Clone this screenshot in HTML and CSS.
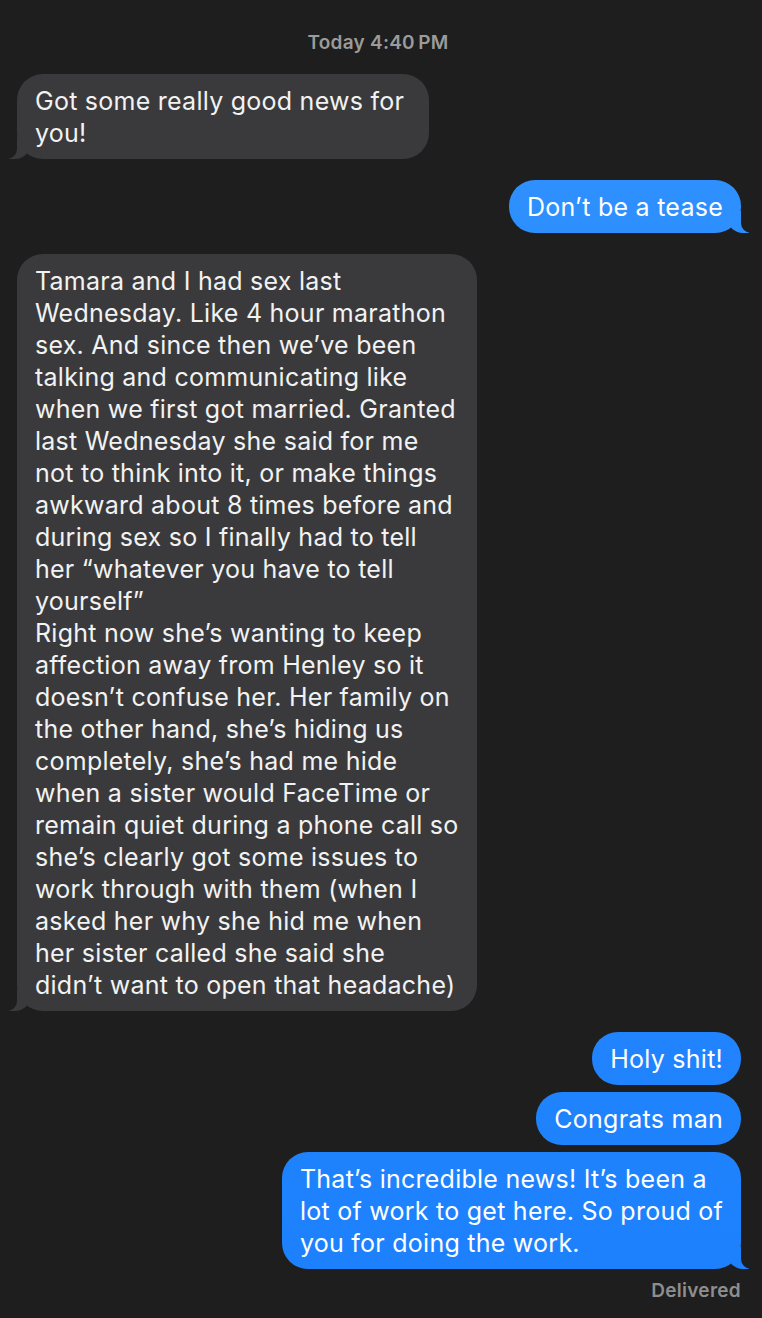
FILE: index.html
```html
<!DOCTYPE html>
<html lang="en">
<head>
<meta charset="utf-8">
<title>Messages</title>
<link rel="stylesheet" href="styles.css">
</head>
<body>
<main class="thread">
  <div class="stamp">Today 4:40&#8201;PM</div>

  <div class="msg in tail">Got some really good news for&nbsp;<br>you!</div>

  <div class="msg out tail">Don’t be a tease</div>

  <div class="msg in tail">Tamara and I had sex last<br>Wednesday. Like 4 hour marathon<br>sex. And since then we’ve been<br>talking and communicating like<br>when we first got married. Granted<br>last Wednesday she said for me<br>not to think into it, or make things<br>awkward about 8 times before and<br>during sex so I finally had to tell<br>her “whatever you have to tell<br>yourself”<br>Right now she’s wanting to keep<br>affection away from Henley so it<br>doesn’t confuse her. Her family on<br>the other hand, she’s hiding us<br>completely, she’s had me hide<br>when a sister would FaceTime or<br>remain quiet during a phone call so<br>she’s clearly got some issues to<br>work through with them (when I<br>asked her why she hid me when<br>her sister called she said she<br>didn’t want to open that headache)</div>

  <div class="msg out">Holy shit!</div>
  <div class="msg out cont">Congrats man</div>
  <div class="msg out cont tail">That’s incredible news! It’s been a<br>lot of work to get here. So proud of<br>you for doing the work.</div>

  <div class="status">Delivered</div>
</main>
</body>
</html>
```

FILE: styles.css
```css
html, body {
  margin: 0;
  padding: 0;
  background: #1e1e1e;
}

body {
  font-family: Inter, "Liberation Sans", Arial, sans-serif;
  -webkit-font-smoothing: antialiased;
}

.thread {
  display: flex;
  flex-direction: column;
  padding: 31px 21px 0 17px;
}

.stamp {
  align-self: center;
  color: #9b9b9b;
  font-size: 19px;
  font-weight: 600;
  letter-spacing: 0.25px;
  line-height: 24px;
  margin-bottom: 19px;
  padding-right: 2px;
}

.msg {
  position: relative;
  max-width: 440px;
  padding: 10.5px 18px;
  font-size: 25px;
  letter-spacing: 0.25px;
  line-height: 32px;
  color: #f2f2f2;
  border-radius: 26px;
  margin-top: 21px;
}

.stamp + .msg {
  margin-top: 0;
}

.msg.cont {
  margin-top: 7px;
}

.msg.in {
  align-self: flex-start;
  background: #3a3a3c;
}

.msg.out {
  align-self: flex-end;
  color: #ffffff;
  background: linear-gradient(#3192fe, #1c80fd) fixed;
}

/* bubble tails */
.msg.tail::before,
.msg.tail::after {
  content: "";
  position: absolute;
  bottom: 0;
  height: 22px;
}

.msg.in.tail::before {
  left: -8px;
  width: 22px;
  background: #3a3a3c;
  border-bottom-right-radius: 16px;
}

.msg.in.tail::after {
  left: -12px;
  width: 12px;
  background: #1e1e1e;
  border-bottom-right-radius: 10px;
}

.msg.out.tail::before {
  right: -8px;
  width: 22px;
  background: linear-gradient(#3192fe, #1c80fd) fixed;
  border-bottom-left-radius: 16px;
}

.msg.out.tail::after {
  right: -12px;
  width: 12px;
  background: #1e1e1e;
  border-bottom-left-radius: 10px;
}

.status {
  align-self: flex-end;
  color: #8e8e8e;
  font-size: 19px;
  font-weight: 600;
  letter-spacing: 0.3px;
  line-height: 24px;
  margin-top: 10px;
}
```
